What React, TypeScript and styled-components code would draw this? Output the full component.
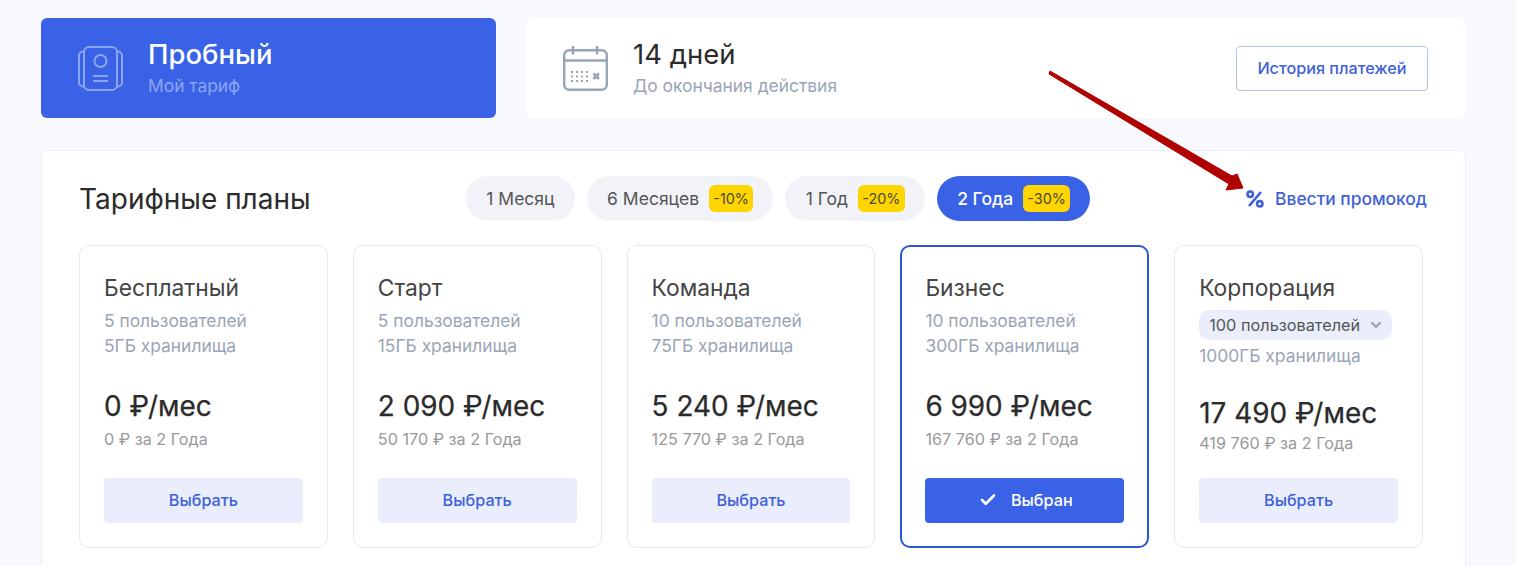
import styled, { createGlobalStyle } from "styled-components";
import { Check, ChevronDown } from "lucide-react";

const GlobalStyle = createGlobalStyle`
  html, body {
    margin: 0;
    padding: 0;
    height: 566px;
    overflow: hidden;
    background: #f7f9fd;
    font-family: Inter, "Liberation Sans", sans-serif;
  }
  * { box-sizing: border-box; }
`;

const Page = styled.div`
  position: relative;
  width: 1516px;
  height: 566px;
  overflow: hidden;
  padding: 18px 50px 0 41px;
`;

const TopRow = styled.div`
  display: flex;
  gap: 30px;
  margin-bottom: 32px;
`;

const PlanCard = styled.div`
  width: 455px;
  height: 100px;
  background: #3a62e6;
  border-radius: 6px;
  display: flex;
  align-items: center;
  padding-left: 37px;
  gap: 25px;
`;

const TrialCard = styled.div`
  flex: 1;
  height: 100px;
  background: #fff;
  border-radius: 6px;
  display: flex;
  align-items: center;
  padding: 0 38px 0 37px;
  gap: 25px;
`;

const TextBlock = styled.div`
  flex: 1;
  display: flex;
  flex-direction: column;
  gap: 4px;
`;

const BigText = styled.div<{ $light?: boolean }>`
  font-size: 27.5px;
  line-height: 32px;
  font-weight: ${(p) => (p.$light ? 500 : 400)};
  color: ${(p) => (p.$light ? "#fff" : "#2b2b2b")};
`;

const SmallText = styled.div<{ $light?: boolean }>`
  font-size: 17.4px;
  line-height: 24px;
  color: ${(p) => (p.$light ? "#8ea6f2" : "#9aa5b5")};
`;

const OutlineButton = styled.button`
  width: 192px;
  height: 45px;
  background: #fff;
  border: 1px solid #b4c3ec;
  border-radius: 4px;
  color: #3f61d8;
  font: 500 16.2px Inter, sans-serif;
`;

const Panel = styled.section`
  background: #fff;
  border: 1px solid #e9edf5;
  border-radius: 6px;
  padding: 25px 38px 0 37px;
  height: 460px;
`;

const PanelHeader = styled.div`
  display: flex;
  align-items: center;
  height: 45px;
  margin-bottom: 24px;
`;

const Title = styled.h2`
  margin: 0;
  width: 387px;
  font-size: 28px;
  font-weight: 400;
  color: #2b2b2b;
`;

const Periods = styled.div`
  display: flex;
  gap: 12px;
  flex: 1;
`;

const Period = styled.div<{ $active?: boolean }>`
  height: 45px;
  padding: 0 20.3px;
  border-radius: 23px;
  display: flex;
  align-items: center;
  gap: 10px;
  font-size: 17.5px;
  font-weight: ${(p) => (p.$active ? 500 : 400)};
  color: ${(p) => (p.$active ? "#fff" : "#555")};
  background: ${(p) => (p.$active ? "#3a62e6" : "#f1f3f9")};
`;

const Discount = styled.span`
  height: 27px;
  padding: 0 4.2px;
  border-radius: 6px;
  background: #ffd500;
  color: #4a4a3a;
  font-size: 14.4px;
  font-weight: 400;
  display: flex;
  align-items: center;
`;

const Promo = styled.div`
  display: flex;
  align-items: center;
  gap: 11px;
  color: #3f61d8;
  font-size: 17.4px;
  font-weight: 500;
`;

const Plans = styled.div`
  display: grid;
  grid-template-columns: repeat(5, 248.8px);
  gap: 25px;
`;

const Plan = styled.div<{ $selected?: boolean }>`
  height: 303px;
  border: ${(p) => (p.$selected ? "2px solid #2b55d4" : "1px solid #e6e9f2")};
  border-radius: 10px;
  padding: ${(p) => (p.$selected ? "27px 23px 23px" : "28px 24px 24px")};
  display: flex;
  flex-direction: column;
`;

const PlanName = styled.div`
  font-size: 22.8px;
  line-height: 28px;
  color: #444;
  margin-bottom: 6px;
`;

const Feature = styled.div`
  font-size: 17.4px;
  line-height: 25px;
  color: #9aa5b5;
`;

const UsersSelect = styled.div`
  align-self: flex-start;
  display: flex;
  align-items: center;
  gap: 8px;
  height: 30px;
  padding: 0 8px 0 10px;
  margin: 2px 0 3px;
  border-radius: 10px;
  background: #eaeefb;
  color: #555;
  font-size: 16.3px;
`;

const Price = styled.div<{ $tight?: boolean }>`
  margin-top: ${(p) => (p.$tight ? 26.5 : 30)}px;
  font-size: 27.9px;
  line-height: 36px;
  font-weight: 400;
  -webkit-text-stroke: 0.25px #2b2b2b;
  color: #2b2b2b;
`;

const Total = styled.div<{ $tight?: boolean }>`
  font-size: 16.2px;
  line-height: 20px;
  margin-top: ${(p) => (p.$tight ? 2 : 5)}px;
  color: #999;
`;

const SelectButton = styled.button<{ $selected?: boolean }>`
  width: 100%;
  height: 45px;
  margin-top: auto;
  border: 0;
  border-radius: 4px;
  padding: 0 0 1px ${(p) => (p.$selected ? 2 : 0)}px;
  display: flex;
  align-items: center;
  justify-content: center;
  gap: 14px;
  background: ${(p) => (p.$selected ? "#3a62e6" : "#eaeefc")};
  color: ${(p) => (p.$selected ? "#fff" : "#3f61d8")};
  font: 500 16.2px Inter, sans-serif;
`;

const ArrowOverlay = styled.svg`
  position: absolute;
  left: 0;
  top: 0;
  pointer-events: none;
`;

const PlanIcon = () => (
  <svg width="45" height="45" viewBox="0 0 45 45" fill="none" stroke="#8ca5f2" strokeWidth="2">
    <rect x="6" y="1" width="33" height="43" rx="5" />
    <path d="M6 5.5H5a4 4 0 0 0-4 4v27a4 4 0 0 0 4 4h1M39 5.5h1a4 4 0 0 1 4 4v27a4 4 0 0 1-4 4h-1" />
    <circle cx="22.5" cy="15" r="6" />
    <path d="M15 30h15M15 35h15" />
  </svg>
);

const CalendarIcon = () => (
  <svg width="45" height="45" viewBox="0 0 45 45" fill="none" stroke="#98a5b6" strokeWidth="2.4">
    <rect x="1.2" y="4.2" width="42.6" height="39.6" rx="5" />
    <path d="M1.2 14.5h42.6M10 0v8.5M34 0v8.5" />
    <path d="M30.5 27.5l5.5 5.5M36 27.5l-5.5 5.5" strokeWidth="2.6" />
    <path d="M8 26h2M13 26h2M18 26h2M23 26h2M8 30.5h2M13 30.5h2M18 30.5h2M23 30.5h2M8 35h2M13 35h2M18 35h2M23 35h2" strokeWidth="2" />
  </svg>
);

const PercentIcon = () => (
  <svg width="18" height="18" viewBox="0 0 18 18" fill="none" stroke="#3f61d8" strokeWidth="2.6">
    <circle cx="4.2" cy="4.2" r="2.7" />
    <circle cx="13.8" cy="13.8" r="2.7" />
    <path d="M3 16L15 2" />
  </svg>
);

const periods = [
  { label: "1 Месяц" },
  { label: "6 Месяцев", discount: "-10%" },
  { label: "1 Год", discount: "-20%" },
  { label: "2 Года", discount: "-30%", active: true },
];

const plans = [
  { name: "Бесплатный", users: "5 пользователей", storage: "5ГБ хранилища", price: "0 ₽/мес", total: "0 ₽ за 2 Года" },
  { name: "Старт", users: "5 пользователей", storage: "15ГБ хранилища", price: "2 090 ₽/мес", total: "50 170 ₽ за 2 Года" },
  { name: "Команда", users: "10 пользователей", storage: "75ГБ хранилища", price: "5 240 ₽/мес", total: "125 770 ₽ за 2 Года" },
  { name: "Бизнес", users: "10 пользователей", storage: "300ГБ хранилища", price: "6 990 ₽/мес", total: "167 760 ₽ за 2 Года", selected: true },
  { name: "Корпорация", users: "100 пользователей", storage: "1000ГБ хранилища", price: "17 490 ₽/мес", total: "419 760 ₽ за 2 Года", select: true },
];

export default function App() {
  return (
    <Page>
      <GlobalStyle />
      <TopRow>
        <PlanCard>
          <PlanIcon />
          <TextBlock>
            <BigText $light>Пробный</BigText>
            <SmallText $light>Мой тариф</SmallText>
          </TextBlock>
        </PlanCard>
        <TrialCard>
          <CalendarIcon />
          <TextBlock>
            <BigText>14 дней</BigText>
            <SmallText>До окончания действия</SmallText>
          </TextBlock>
          <OutlineButton>История платежей</OutlineButton>
        </TrialCard>
      </TopRow>
      <Panel>
        <PanelHeader>
          <Title>Тарифные планы</Title>
          <Periods>
            {periods.map((p) => (
              <Period key={p.label} $active={p.active}>
                {p.label}
                {p.discount && <Discount>{p.discount}</Discount>}
              </Period>
            ))}
          </Periods>
          <Promo>
            <PercentIcon />
            Ввести промокод
          </Promo>
        </PanelHeader>
        <Plans>
          {plans.map((p) => (
            <Plan key={p.name} $selected={p.selected}>
              <PlanName>{p.name}</PlanName>
              {p.select ? (
                <UsersSelect>
                  {p.users}
                  <ChevronDown size={16} color="#98a5b6" strokeWidth={3.5} />
                </UsersSelect>
              ) : (
                <Feature>{p.users}</Feature>
              )}
              <Feature>{p.storage}</Feature>
              <Price $tight={p.select}>{p.price}</Price>
              <Total $tight={p.select}>{p.total}</Total>
              <SelectButton $selected={p.selected}>
                {p.selected && <Check size={18} strokeWidth={3.5} />}
                {p.selected ? "Выбран" : "Выбрать"}
              </SelectButton>
            </Plan>
          ))}
        </Plans>
      </Panel>
      <ArrowOverlay width="1516" height="566" viewBox="0 0 1516 566">
        <path d="M1050 71L1232 176L1237 174L1243 188L1226 190L1229 184L1049 74Z" fill="#b00000" stroke="#b00000" strokeWidth="1" strokeLinejoin="round" />
      </ArrowOverlay>
    </Page>
  );
}
